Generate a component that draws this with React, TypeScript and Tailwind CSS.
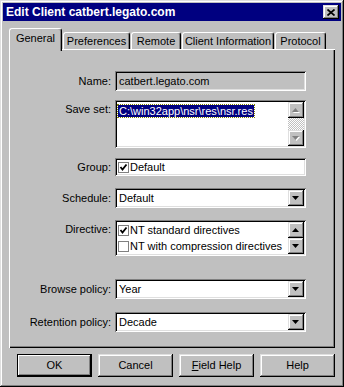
import type { ReactNode } from "react";

const raised =
  "shadow-[inset_-1px_-1px_#000,inset_1px_1px_#dfdfdf,inset_-2px_-2px_#808080,inset_2px_2px_#fff]";
const sunken =
  "shadow-[inset_1px_1px_#808080,inset_-1px_-1px_#fff,inset_2px_2px_#000,inset_-2px_-2px_#dfdfdf]";

const tabs = [
  { label: "General", w: "w-[53px]" },
  { label: "Preferences", w: "w-[67px]" },
  { label: "Remote", w: "w-[50px]" },
  { label: "Client Information", w: "w-[92px]" },
  { label: "Protocol", w: "w-[51px]" },
];

function Arrow({ up, disabled }: { up?: boolean; disabled?: boolean }) {
  const d = up ? "M0 4 L3.5 0 L7 4 Z" : "M0 0 L7 0 L3.5 4 Z";
  return (
    <svg width="8" height="5" viewBox="0 0 8 5">
      {disabled && <path d={d} fill="#fff" transform="translate(1 1)" />}
      <path d={d} fill={disabled ? "#808080" : "#000"} />
    </svg>
  );
}

function ScrollButton({ up, disabled }: { up?: boolean; disabled?: boolean }) {
  return (
    <div className={`w-[16px] h-[16px] bg-[#c0c0c0] flex items-center justify-center ${raised}`}>
      <Arrow up={up} disabled={disabled} />
    </div>
  );
}

function CheckBox({ checked }: { checked?: boolean }) {
  return (
    <div className="w-[11px] h-[11px] bg-white border border-[#808080] flex items-center justify-center shrink-0">
      {checked && (
        <svg width="9" height="9" viewBox="0 0 9 9">
          <path d="M1.5 4 L3.5 6.5 L7.5 1.5" stroke="#000" strokeWidth="1.8" fill="none" />
        </svg>
      )}
    </div>
  );
}

function Row({
  label,
  top = false,
  className,
  children,
}: {
  label: string;
  top?: boolean;
  className: string;
  children: ReactNode;
}) {
  return (
    <div className={`flex ${top ? "items-start" : "items-center"} ${className}`}>
      <div className={`w-[102px] text-right ${top ? "pt-[1px]" : ""}`}>{label}</div>
      <div className="ml-[4px] w-[191px]">{children}</div>
    </div>
  );
}

function Dropdown({ value }: { value: string }) {
  return (
    <div className={`h-[20px] bg-white flex items-center p-[2px] ${sunken}`}>
      <span className="flex-1 pl-[2px]">{value}</span>
      <ScrollButton />
    </div>
  );
}

function Button({ children, primary }: { children: ReactNode; primary?: boolean }) {
  return (
    <div
      className={`w-[75px] h-[23px] bg-[#c0c0c0] flex items-center justify-center ${
        primary
          ? "shadow-[inset_0_0_0_1px_#000,inset_-2px_-2px_#000,inset_2px_2px_#fff,inset_-3px_-3px_#808080]"
          : raised
      }`}
    >
      {children}
    </div>
  );
}

export default function App() {
  return (
    <div
      className={`w-[344px] h-[387px] bg-[#c0c0c0] p-[3px] flex flex-col text-[11px] text-black font-['Liberation_Sans',Arial,sans-serif] ${"shadow-[inset_-1px_-1px_#000,inset_1px_1px_#dfdfdf,inset_-2px_-2px_#808080,inset_2px_2px_#fff]"}`}
    >
      {/* title bar */}
      <div className="h-[18px] bg-[#000080] flex items-center pl-[3px] pr-[2px]">
        <span className="flex-1 text-white font-bold text-[12px] leading-none">
          Edit Client catbert.legato.com
        </span>
        <div className={`w-[16px] h-[14px] bg-[#c0c0c0] flex items-center justify-center ${raised}`}>
          <svg width="8" height="7" viewBox="0 0 8 7">
            <path d="M0.5 0.5 L7.5 6.5 M7.5 0.5 L0.5 6.5" stroke="#000" strokeWidth="1.7" />
          </svg>
        </div>
      </div>

      <div className="pt-[7px] px-[6px]">
        {/* tabs */}
        <div className="flex items-end h-[21px]">
          {tabs.map((t, i) => {
            const active = i === 0;
            return (
              <div
                key={t.label}
                className={`${t.w} ${
                  active ? "h-[23px] -mb-[2px] relative z-10 pb-[4px]" : "h-[17px] ml-[1px]"
                } bg-[#c0c0c0] rounded-t-[3px] border-t border-l border-white border-r border-r-black shadow-[inset_-1px_0_#808080] flex items-center justify-center`}
              >
                {t.label}
              </div>
            );
          })}
        </div>

        {/* panel */}
        <div className="h-[299px] flex flex-col pt-[22px] shadow-[inset_1px_1px_#fff,inset_-1px_-1px_#000,inset_-2px_-2px_#808080]">
          <Row label="Name:" className="">
            <div className={`h-[20px] flex items-center pl-[4px] ${sunken}`}>catbert.legato.com</div>
          </Row>

          <Row label="Save set:" top className="mt-[9px]">
            <div className={`h-[48px] bg-white p-[2px] flex ${sunken}`}>
              <div className="flex-1 pl-[1px] pt-[1px]">
                <span className="bg-[#000080] text-white outline outline-1 outline-dotted outline-[#808000] px-[1px]">
                  C:\win32app\nsr\res\nsr.res
                </span>
              </div>
              <div className="flex flex-col">
                <ScrollButton up disabled />
                <div className="flex-1 bg-[repeating-conic-gradient(#c0c0c0_0_25%,#fff_0_50%)] bg-[length:2px_2px]" />
                <ScrollButton disabled />
              </div>
            </div>
          </Row>

          <Row label="Group:" className="mt-[10px]">
            <div className={`h-[18px] bg-white flex items-center gap-[1px] pl-[3px] ${sunken}`}>
              <CheckBox checked />
              <span>Default</span>
            </div>
          </Row>

          <Row label="Schedule:" className="mt-[12px]">
            <Dropdown value="Default" />
          </Row>

          <Row label="Directive:" top className="mt-[12px]">
            <div className={`h-[36px] bg-white p-[2px] flex ${sunken}`}>
              <div className="flex-1 flex flex-col pl-[1px]">
                <div className="h-[16px] flex items-center gap-[1px]">
                  <CheckBox checked />
                  <span>NT standard directives</span>
                </div>
                <div className="h-[16px] flex items-center gap-[1px]">
                  <CheckBox />
                  <span>NT with compression directives</span>
                </div>
              </div>
              <div className="flex flex-col">
                <ScrollButton up />
                <ScrollButton />
              </div>
            </div>
          </Row>

          <Row label="Browse policy:" className="mt-[23px]">
            <Dropdown value="Year" />
          </Row>

          <Row label="Retention policy:" className="mt-[13px]">
            <Dropdown value="Decade" />
          </Row>
        </div>

        {/* buttons */}
        <div className="flex justify-end gap-[6px] mt-[6px]">
          <Button primary>OK</Button>
          <Button>Cancel</Button>
          <Button>
            <span>
              <span className="underline">F</span>ield Help
            </span>
          </Button>
          <Button>Help</Button>
        </div>
      </div>
    </div>
  );
}
